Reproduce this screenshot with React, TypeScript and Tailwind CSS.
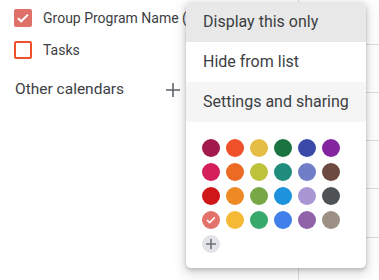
import React from 'react';

const palette = [
  ['#a21a4d', '#f0502a', '#e3bd46', '#1b7340', '#3b4aa8', '#8425a0'],
  ['#d31f5a', '#eb6a24', '#bec23b', '#1f8c7c', '#6f7ec6', '#6d4a40'],
  ['#cf1719', '#ed8a24', '#78a846', '#1d93dd', '#a997d4', '#4f5254'],
  ['#e2726b', '#f5b935', '#37a96b', '#3f80ea', '#9063a8', '#9d9085'],
];

function Check({ className }: { className?: string }) {
  return (
    <svg viewBox="0 0 18 18" className={className} fill="none">
      <path d="M4 9.2l3.2 3.1L14 5.6" stroke="white" strokeWidth="2" />
    </svg>
  );
}

export default function App() {
  return (
    <div className="relative w-[379px] h-[280px] overflow-hidden bg-white font-['Roboto',sans-serif] text-[#3c4043]">
      <div className="flex h-full">
        {/* sidebar */}
        <div className="w-[299px] border-r border-[#dadce0] pt-[9px]">
          <div className="flex items-center h-[18px] pl-[14px] gap-[11px] whitespace-nowrap">
            <span className="w-[18px] h-[18px] rounded-[2px] bg-[#e0706a] flex items-center justify-center shrink-0">
              <Check className="w-[18px] h-[18px]" />
            </span>
            <span className="text-[14px] w-[143px] overflow-hidden">Group Program Name (Admin)</span>
          </div>
          <div className="flex items-center h-[18px] mt-[14px] pl-[14px] gap-[11px]">
            <span className="w-[18px] h-[18px] rounded-[2px] border-2 border-[#f0502a] shrink-0" />
            <span className="text-[14px]">Tasks</span>
          </div>
          <div className="flex items-center justify-between h-[20px] mt-[21px] pl-[15px] w-[180px]">
            <span className="text-[15.5px]">Other calendars</span>
            <svg viewBox="0 0 14 14" className="w-[14px] h-[14px]" fill="none">
              <path d="M7 0v14M0 7h14" stroke="#5f6368" strokeWidth="1.6" />
            </svg>
          </div>
        </div>
        {/* grid */}
        <div className="flex-1">
          <div className="h-[45px] border-b border-[#dadce0]" />
          <div className="h-[48px] border-b border-[#dadce0]" />
          <div className="h-[48px] border-b border-[#dadce0]" />
          <div className="h-[48px] border-b border-[#dadce0]" />
          <div className="h-[49px] border-b border-[#dadce0]" />
        </div>
      </div>

      {/* popup menu */}
      <div className="absolute left-[186px] top-[2px] w-[180px] h-[266px] bg-white rounded-[5px] overflow-hidden shadow-[0_2px_4px_rgba(0,0,0,0.2),0_4px_12px_3px_rgba(0,0,0,0.12)]">
        <div className="h-[40px] flex items-center pl-[17px] bg-[#e8e8e8] text-[16px] text-[#3c4043]">Display this only</div>
        <div className="h-[40px] flex items-center pl-[17px] text-[16px] text-[#3c4043]">Hide from list</div>
        <div className="h-[40px] flex items-center pl-[17px] bg-[#f5f5f5] text-[16px] text-[#3c4043]">Settings and sharing</div>
        <div className="pt-[17px] pl-[16px] grid grid-cols-[repeat(6,18px)] gap-[6px]">
          {palette.flat().map((c, i) => (
            <span key={i} className="w-[18px] h-[18px] rounded-full flex items-center justify-center" style={{ backgroundColor: c }}>
              {i === 18 && <Check className="w-[14px] h-[14px]" />}
            </span>
          ))}
          <span className="w-[18px] h-[18px] rounded-full bg-[#e3e4e7] flex items-center justify-center">
            <svg viewBox="0 0 10 10" className="w-[10px] h-[10px]" fill="none">
              <path d="M5 0v10M0 5h10" stroke="#6f7378" strokeWidth="1.6" />
            </svg>
          </span>
        </div>
      </div>
    </div>
  );
}
